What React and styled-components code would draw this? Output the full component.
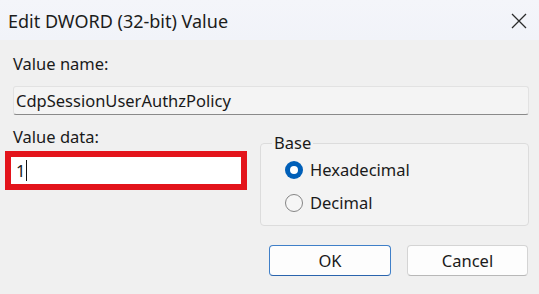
import styled, { createGlobalStyle } from "styled-components";

const GlobalStyle = createGlobalStyle`
  html, body {
    margin: 0;
    padding: 0;
    background: #f0f0f0;
  }
  * {
    box-sizing: border-box;
  }
`;

const Dialog = styled.div`
  width: 539px;
  height: 294px;
  background: #f0f0f0;
  font-family: "Noto Sans", "Liberation Sans", sans-serif;
  color: #1a1a1a;
  overflow: hidden;
`;

const TitleBar = styled.div`
  height: 40px;
  display: flex;
  align-items: center;
  justify-content: space-between;
  padding: 0 12px 0 8px;
  background: linear-gradient(#f4f5fa, #f1f3f9);
`;

const Title = styled.div`
  font-size: 18px;
  color: #1c1c1c;
  margin-top: 1px;
`;

const CloseButton = styled.div`
  width: 16px;
  height: 16px;
  display: flex;
  margin-top: 2px;
`;

const Body = styled.div`
  padding: 0 10px 0 13px;
`;

const Label = styled.div`
  font-size: 16.5px;
  line-height: 20px;
  margin-top: ${(p) => p.mt || "0px"};
`;

const NameField = styled.div`
  margin-top: 12px;
  height: 29px;
  background: #f4f4f4;
  border: 1px solid #e2e2e2;
  border-bottom: 1px solid #8a8a8a;
  border-radius: 3px;
  padding: 0 2px;
  font-size: 16.5px;
  line-height: 27px;
  color: #1a1a1a;
`;

const Row = styled.div`
  margin-top: 12px;
  display: grid;
  grid-template-columns: 234px 1fr;
  column-gap: 13px;
  align-items: start;
`;

const DataColumn = styled.div`
  display: flex;
  flex-direction: column;
`;

const Highlight = styled.div`
  margin-top: 4px;
  margin-left: -8px;
  width: 242px;
  height: 39px;
  border: 6px solid #e3141b;
  background: #ffffff;
  display: flex;
  align-items: center;
  padding-left: 5px;
  font-size: 16.5px;
`;

const Caret = styled.span`
  display: inline-block;
  width: 1px;
  height: 21px;
  background: #111;
  margin-left: 1px;
`;

const GroupBox = styled.fieldset`
  margin: 6px 0 0 0;
  padding: 0 0 0 24px;
  height: 93px;
  border: 1px solid #dcdcdc;
  border-radius: 4px;
  background: #f3f3f3;
`;

const Legend = styled.legend`
  font-size: 16.5px;
  line-height: 20px;
  padding: 0 2px;
  margin-left: -13px;
`;

const RadioRow = styled.label`
  display: flex;
  align-items: center;
  gap: 7px;
  font-size: 16.5px;
  height: 33px;
`;

const RadioDot = styled.span`
  width: 18px;
  height: 18px;
  border-radius: 50%;
  flex: none;
  background: ${(p) => (p.checked ? "#005fb8" : "#f6f6f6")};
  border: ${(p) => (p.checked ? "none" : "1px solid #858585")};
  display: flex;
  align-items: center;
  justify-content: center;
  &::after {
    content: "";
    display: ${(p) => (p.checked ? "block" : "none")};
    width: 8px;
    height: 8px;
    border-radius: 50%;
    background: #ffffff;
  }
`;

const ButtonRow = styled.div`
  margin-top: 19px;
  display: flex;
  justify-content: flex-end;
  gap: 16px;
  padding-right: 1px;
`;

const Button = styled.div`
  width: ${(p) => p.width || "121px"};
  height: 31px;
  border-radius: 4px;
  background: #fdfdfd;
  border: 1px solid ${(p) => (p.primary ? "#3f7fc8" : "#d4d4d4")};
  border-bottom-color: ${(p) => (p.primary ? "#2a64ad" : "#b8b8b8")};
  display: flex;
  align-items: center;
  justify-content: center;
  font-size: 16.5px;
  color: #1a1a1a;
`;

const CloseIcon = () => (
  <svg width="16" height="16" viewBox="0 0 16 16">
    <path d="M1 1 L15 15 M15 1 L1 15" stroke="#2b2b2b" strokeWidth="1.3" fill="none" />
  </svg>
);

export default function App() {
  return (
    <>
      <GlobalStyle />
      <Dialog>
        <TitleBar>
          <Title>Edit DWORD (32-bit) Value</Title>
          <CloseButton>
            <CloseIcon />
          </CloseButton>
        </TitleBar>
        <Body>
          <Label mt="14px">Value name:</Label>
          <NameField>CdpSessionUserAuthzPolicy</NameField>
          <Row>
            <DataColumn>
              <Label>Value data:</Label>
              <Highlight>
                1<Caret />
              </Highlight>
            </DataColumn>
            <GroupBox>
              <Legend>Base</Legend>
              <RadioRow>
                <RadioDot checked />
                Hexadecimal
              </RadioRow>
              <RadioRow>
                <RadioDot />
                Decimal
              </RadioRow>
            </GroupBox>
          </Row>
          <ButtonRow>
            <Button primary width="122px">OK</Button>
            <Button>Cancel</Button>
          </ButtonRow>
        </Body>
      </Dialog>
    </>
  );
}
